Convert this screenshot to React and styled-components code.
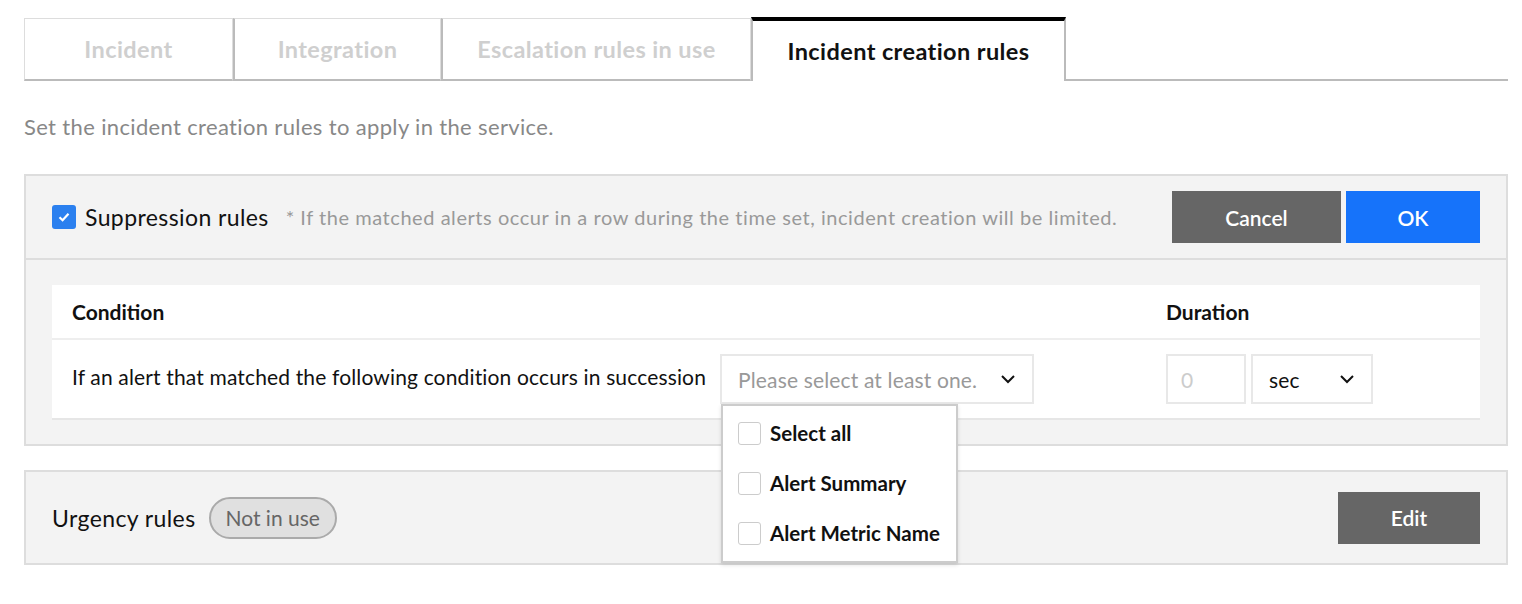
import React from 'react'
import styled, { createGlobalStyle } from 'styled-components'

const GlobalStyle = createGlobalStyle`
  body {
    margin: 0;
    background: #fff;
    font-family: Lato, "Noto Sans", sans-serif;
    color: #111;
  }
`

const tabs = ['Incident', 'Integration', 'Escalation rules in use', 'Incident creation rules']
const tabWidths = [209, 208, 310, 315]
const options = ['Select all', 'Alert Summary', 'Alert Metric Name']

const Chevron = () => (
  <svg width="16" height="10" viewBox="0 0 16 10">
    <path d="M2 2 L8 8 L14 2" fill="none" stroke="#111" strokeWidth="2" />
  </svg>
)

const Check = () => (
  <svg width="16" height="16" viewBox="0 0 16 16">
    <path d="M3.5 8.2 L6.6 11.2 L12.5 4.8" fill="none" stroke="#fff" strokeWidth="2.2" />
  </svg>
)

const App = () => {
  return (
    <Page>
      <GlobalStyle />
      <TabBar>
        {tabs.map((t, i) => (
          <Tab key={t} $active={i === 3} style={{ width: tabWidths[i] }}>{t}</Tab>
        ))}
        <TabFill />
      </TabBar>
      <Description>Set the incident creation rules to apply in the service.</Description>

      <Panel>
        <PanelHeader>
          <CheckBox $checked><Check /></CheckBox>
          <PanelTitle>Suppression rules</PanelTitle>
          <Note>* If the matched alerts occur in a row during the time set, incident creation will be limited.</Note>
          <Buttons>
            <Button $width={169}>Cancel</Button>
            <Button $width={134} $primary>OK</Button>
          </Buttons>
        </PanelHeader>
        <PanelBody>
          <Table>
            <HeadRow>
              <ConditionCell>Condition</ConditionCell>
              <DurationCell>Duration</DurationCell>
            </HeadRow>
            <BodyRow>
              <ConditionCell>
                <RowText>If an alert that matched the following condition occurs in succession</RowText>
                <SelectWrap>
                  <Select $width={314}>
                    <Placeholder>Please select at least one.</Placeholder>
                    <Chevron />
                  </Select>
                  <Menu>
                    {options.map(o => (
                      <MenuItem key={o}>
                        <CheckBox $small />
                        {o}
                      </MenuItem>
                    ))}
                  </Menu>
                </SelectWrap>
              </ConditionCell>
              <DurationCell>
                <NumberInput>0</NumberInput>
                <Select $width={122}>
                  <span>sec</span>
                  <Chevron />
                </Select>
              </DurationCell>
            </BodyRow>
          </Table>
        </PanelBody>
      </Panel>

      <Panel $gap>
        <UrgencyRow>
          <PanelTitle $plain>Urgency rules</PanelTitle>
          <Badge>Not in use</Badge>
          <Buttons>
            <Button $width={142}>Edit</Button>
          </Buttons>
        </UrgencyRow>
      </Panel>
    </Page>
  )
}

export default App

const Page = styled.div`
  padding: 17px 14px 30px 24px;
`
const TabBar = styled.div`
  display: flex;
  align-items: flex-end;
  height: 64px;
`
const Tab = styled.div`
  box-sizing: border-box;
  height: ${p => (p.$active ? '64px' : '63px')};
  display: flex;
  align-items: center;
  justify-content: center;
  font-size: 23.5px;
  letter-spacing: 0.4px;
  font-weight: 700;
  color: ${p => (p.$active ? '#111' : '#cfcfcf')};
  background: #fff;
  border: 1px solid #ddd;
  border-top: ${p => (p.$active ? '4px solid #000' : '1px solid #ddd')};
  border-bottom: ${p => (p.$active ? 'none' : '2px solid #bbb')};
  border-left: ${p => (p.$active ? '2px solid #bbb' : '1px solid #ddd')};
  border-right: ${p => (p.$active ? '2px solid #bbb' : '1px solid #ddd')};
  & + & {
    border-left: ${p => (p.$active ? '2px solid #bbb' : 'none')};
  }
`
const TabFill = styled.div`
  flex: 1;
  border-bottom: 2px solid #bbb;
`
const Description = styled.p`
  margin: 34px 0 35px;
  line-height: 24px;
  font-size: 22px;
  letter-spacing: 0.35px;
  color: #888;
`
const Panel = styled.div`
  background: #f3f3f3;
  border: 2px solid #ddd;
  margin-top: ${p => (p.$gap ? '24px' : '0')};
`
const PanelHeader = styled.div`
  display: flex;
  align-items: center;
  height: 82px;
  padding: 0 26px;
  border-bottom: 2px solid #ddd;
`
const CheckBox = styled.span`
  box-sizing: border-box;
  width: ${p => (p.$small ? '23px' : '24px')};
  height: ${p => (p.$small ? '23px' : '24px')};
  border-radius: 3px;
  display: inline-flex;
  align-items: center;
  justify-content: center;
  flex-shrink: 0;
  background: ${p => (p.$checked ? '#2b80ef' : '#fff')};
  border: ${p => (p.$checked ? 'none' : '1px solid #ccc')};
`
const PanelTitle = styled.span`
  font-size: 23px;
  letter-spacing: 0.4px;
  color: #111;
  margin-left: ${p => (p.$plain ? '0' : '9px')};
`
const Note = styled.span`
  font-size: 20px;
  letter-spacing: 0.55px;
  color: #999;
  margin-left: 17px;
  white-space: nowrap;
`
const Buttons = styled.div`
  margin-left: auto;
  display: flex;
  gap: 5px;
`
const Button = styled.button`
  width: ${p => p.$width}px;
  height: 52px;
  border: none;
  background: ${p => (p.$primary ? '#1673fa' : '#666')};
  color: #fff;
  font-family: inherit;
  font-size: 21px;
  font-weight: 600;
`
const PanelBody = styled.div`
  padding: 25px 26px 24px;
`
const Table = styled.div`
  background: #fff;
  border-bottom: 2px solid #e6e6e6;
`
const HeadRow = styled.div`
  display: flex;
  align-items: center;
  height: 53px;
  border-bottom: 2px solid #eee;
  font-size: 21px;
  font-weight: 700;
`
const BodyRow = styled.div`
  display: flex;
  align-items: center;
  height: 78px;
  font-size: 21px;
  letter-spacing: 0.15px;
`
const RowText = styled.span`
  margin-bottom: 6px;
`
const ConditionCell = styled.div`
  width: 1094px;
  padding-left: 20px;
  display: flex;
  align-items: center;
  gap: 14px;
`
const DurationCell = styled.div`
  display: flex;
  align-items: center;
  gap: 5px;
`
const SelectWrap = styled.div`
  position: relative;
`
const Select = styled.div`
  box-sizing: border-box;
  width: ${p => p.$width}px;
  height: 50px;
  border: 2px solid #e8e8e8;
  display: flex;
  align-items: center;
  justify-content: space-between;
  padding: 0 16px;
  font-size: 21px;
  color: #111;
`
const Placeholder = styled.span`
  color: #999;
`
const NumberInput = styled.div`
  box-sizing: border-box;
  width: 80px;
  height: 50px;
  border: 2px solid #e8e8e8;
  padding-left: 13px;
  display: flex;
  align-items: center;
  color: #ccc;
  font-size: 21px;
`
const Menu = styled.div`
  position: absolute;
  top: 50px;
  left: 1px;
  width: 237px;
  box-sizing: border-box;
  background: #fff;
  border: 2px solid #ccc;
  box-shadow: 0 2px 4px rgba(0, 0, 0, 0.12);
  padding: 2px 0 3px;
  z-index: 2;
  letter-spacing: 0;
`
const MenuItem = styled.div`
  display: flex;
  align-items: center;
  gap: 9px;
  height: 50px;
  padding-left: 15px;
  font-size: 20.5px;
  font-weight: 700;
  color: #111;
`
const UrgencyRow = styled.div`
  display: flex;
  align-items: center;
  height: 91px;
  padding: 0 26px;
`
const Badge = styled.span`
  margin-left: 13px;
  height: 42px;
  box-sizing: border-box;
  padding: 0 15px;
  display: inline-flex;
  align-items: center;
  border: 2px solid #aaa;
  border-radius: 21px;
  background: #e0e0e0;
  color: #666;
  font-size: 21px;
`
